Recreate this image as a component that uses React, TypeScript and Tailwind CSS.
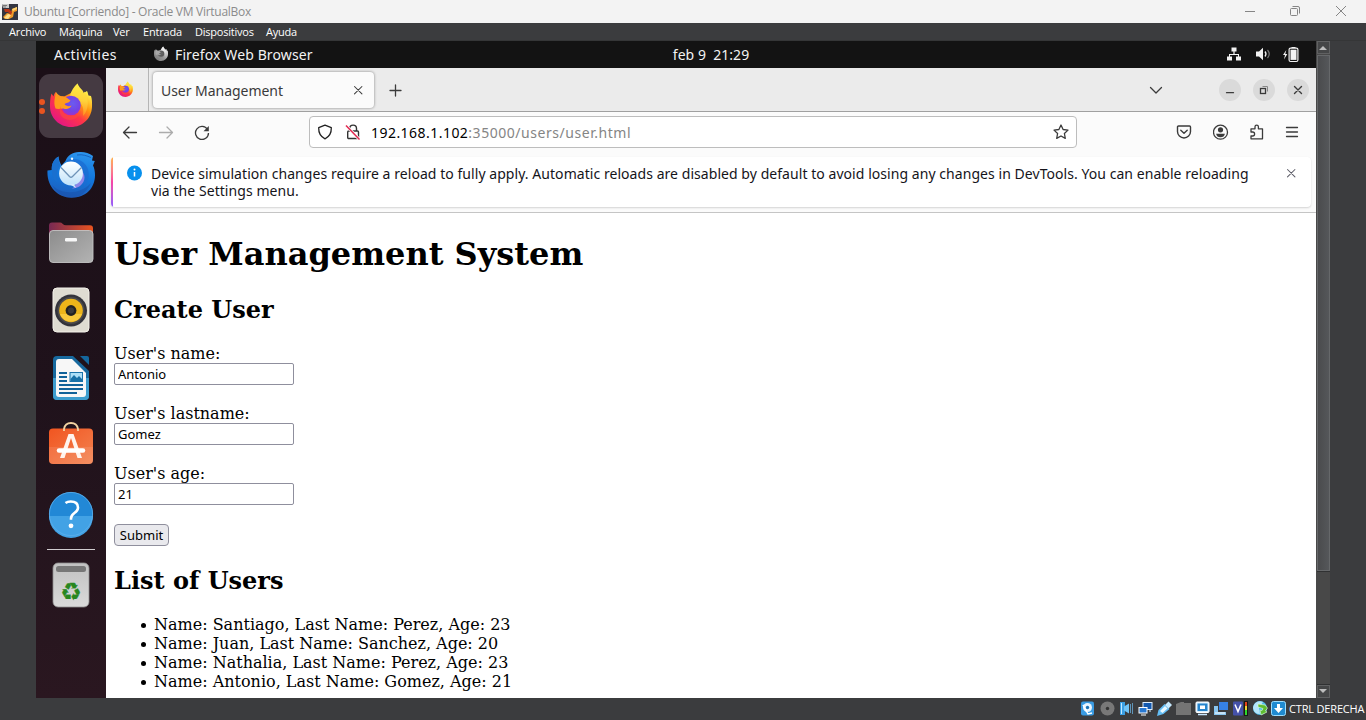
import React from "react";

const UI = "font-['Noto_Sans','Open_Sans',sans-serif]";

function FirefoxIcon({ className, gray = false }: { className: string; gray?: boolean }) {
  const id = gray ? "fg" : "fc";
  return (
    <svg viewBox="0 0 48 48" className={className}>
      <defs>
        <linearGradient id={id + "a"} x1="0.85" y1="0.1" x2="0.2" y2="0.95">
          <stop offset="0.05" stopColor={gray ? "#e4e4e4" : "#fff44f"} />
          <stop offset="0.35" stopColor={gray ? "#bfbfbf" : "#ff980e"} />
          <stop offset="0.6" stopColor={gray ? "#9a9a9a" : "#ff3647"} />
          <stop offset="1" stopColor={gray ? "#7d7d7d" : "#e31587"} />
        </linearGradient>
        <radialGradient id={id + "b"} cx="0.6" cy="0.4" r="0.65">
          <stop offset="0" stopColor={gray ? "#666" : "#6a5cf0"} />
          <stop offset="0.6" stopColor={gray ? "#5a5a5a" : "#7542e5"} />
          <stop offset="1" stopColor={gray ? "#777" : "#a82fc4"} />
        </radialGradient>
        <linearGradient id={id + "c"} x1="0.5" y1="0" x2="0.4" y2="1">
          <stop offset="0" stopColor={gray ? "#fff" : "#ffee45"} />
          <stop offset="0.5" stopColor={gray ? "#ddd" : "#ffd23a"} />
          <stop offset="1" stopColor={gray ? "#aaa" : "#ff8a1e"} />
        </linearGradient>
      </defs>
      <path d="M9 10c-.2 2 .3 3.700 1.300 5.200C13 14 15 14 17 14.500L30 8c-1-2-.5-5 .5-6.500 1 3 3.500 5 5 7 .6 1 1 1.700 1.300 2.500L40 9c1 2 1 3 1.500 4.500l2.500.500C45 17 45.200 20 45 25c-.5 11.500-9.500 20-21 20S3 36 3 24.500c0-4 0-8 1.500-13l2 3C7 12.500 7.500 11 9 10Z" fill={`url(#${id}a)`} />
      <path d="M23 14c1-5 4-9.500 7.500-12.500.3 4.500 4 7 5.500 11 .8-1 1-1.500 1-3C42 14 42.500 28 36 34c1-7 0-11-4-14-3-2-6-3-9-6Z" fill={`url(#${id}c)`} />
      <circle cx="24" cy="23.500" r="9.800" fill={`url(#${id}b)`} />
      <path d="M9 10c1.500 2.500 4 4.500 7.500 4.500 3 0 4.500 2.500 7 4-1.500 2.500-4.500 2.300-6 3.600 1.500 2.500 5 2.500 7 1.400-1 3-5 4.500-8 3-3 0-5 1-8 0C6 20 8.500 14 9 10Z" fill={gray ? "#a8a8a8" : "#ff9b1c"} />
      <path d="M13.500 24c.2 6 5 9.500 10.500 9.500 4.500 0 8-2 10-5-1 6-5.500 9.500-11 9.500-6.500 0-12.500-5-9.500-14Z" fill={gray ? "#8b8b8b" : "#ff4f35"} opacity="0.5" />
    </svg>
  );
}

function ThunderbirdIcon() {
  return (
    <svg viewBox="0 0 48 48" className="size-12">
      <defs>
        <linearGradient id="tb" x1="0.6" y1="0" x2="0.4" y2="1">
          <stop offset="0" stopColor="#2b93ec" />
          <stop offset="0.5" stopColor="#1277dc" />
          <stop offset="1" stopColor="#1f5dbb" />
        </linearGradient>
        <linearGradient id="tw" x1="0" y1="0" x2="0" y2="1">
          <stop offset="0" stopColor="#fff" />
          <stop offset="1" stopColor="#bfe2fb" />
        </linearGradient>
      </defs>
      <path d="M11.500 6.500C6.500 9.500 4.500 14 4.800 20L.5 20.500C-.5 36 10 47.700 24.500 47.700S48 38 48 25c0-3.500-.6-7-2-9.500l1.800-4.500-2.800-.5 1-4.500c-4-3.500-9-4.300-14-4-6.500.3-11.500 3.500-13.500 9l-4 4.500c-1.500-3-2.500-5-3-9Z" fill="url(#tb)" />
      <path d="M11.500 6.500C6.500 9.500 4.500 14 4.800 20c0 5 1.200 9 5.200 12-1-7 0-12 3.500-16.500-1.500-3-2-5-2-9Z" fill="#1a70cf" />
      <path d="M18.500 11c6-3 13-2.500 18 1.500 7 6 7 17 0 25 1.500-8 0-16-6-21-4-3-8-4-12-5.500Z" fill="#1b6dd2" opacity="0.8" />
      <path d="M33 19c6 5 6 12 0 17-2 1.500-5 2.500-8 2.500 2-1 3-2 3.500-4 4-4 5-9 4.500-15.500Z" fill="#8f86e9" />
      <circle cx="24" cy="23.500" r="11.900" fill="url(#tw)" />
      <path d="M23 34.500l6 3.500-2-4Z" fill="#d5ebfc" />
      <path d="M14 17.500l8.500 9c1 1 2 1 3 0l9-9" fill="none" stroke="#6d93b8" strokeWidth="1.300" />
      <circle cx="25" cy="8.700" r="1.200" fill="#eaf6ff" />
      <path d="M30 5c6-1 10 1 14 2.500" fill="none" stroke="#1663bd" strokeWidth="1" />
      <path d="M5 35c8 9 27 11 39-2-4 9-11 14.700-19.500 14.700S9 43 5 35Z" fill="#164aa3" opacity="0.4" />
    </svg>
  );
}

function FilesIcon() {
  return (
    <svg viewBox="0 0 48 48" className="size-12">
      <defs>
        <linearGradient id="fo" x1="0" y1="0" x2="1" y2="0">
          <stop offset="0" stopColor="#772953" />
          <stop offset="1" stopColor="#e95420" />
        </linearGradient>
        <linearGradient id="fb" x1="0" y1="0" x2="1" y2="1">
          <stop offset="0" stopColor="#8c8c8c" />
          <stop offset="1" stopColor="#b3b3b3" />
        </linearGradient>
      </defs>
      <path d="M2 20V7.500q0-3 3-3h8q1.500 0 2.500 1.200Q17 7.300 19 7.300h24q3 0 3 3v10Z" fill="url(#fo)" />
      <rect x="2.500" y="12.500" width="43.500" height="32" rx="3.500" fill="url(#fb)" stroke="#c4c4c4" strokeWidth="0.900" />
      <rect x="18" y="20" width="12" height="3.500" rx="1.200" fill="#f7f7f7" />
    </svg>
  );
}

function RhythmboxIcon() {
  return (
    <svg viewBox="0 0 48 48" className="size-12">
      <rect x="6" y="2" width="36" height="44" rx="4" fill="#dfdcd2" stroke="#f4f2ea" />
      <circle cx="24" cy="24.500" r="16" fill="#34343c" />
      <circle cx="24" cy="24.500" r="13.500" fill="#4c4b4c" />
      <circle cx="24" cy="24.500" r="11.800" fill="#edb51a" />
      <path d="M13 28a11.800 11.800 0 0 0 22 0Z" fill="#f9c93b" />
      <circle cx="24" cy="24.500" r="5.400" fill="#222" />
      <circle cx="24" cy="24.500" r="3" fill="#3b3b3d" />
    </svg>
  );
}

function WriterIcon() {
  return (
    <svg viewBox="0 0 48 48" className="size-12">
      <path d="M10 2h16l16 15v25q0 4-4 4H10q-4 0-4-4V6q0-4 4-4Z" fill="#17699e" />
      <path d="M6 24h36v18q0 4-4 4H10q-4 0-4-4Z" fill="#3d9dce" />
      <path d="M33 2h7q2 0 2 2v7Z" fill="#14679d" />
      <path d="M12 5h13l14 14v21q0 3-3 3H12q-3 0-3-3V8q0-3 3-3Z" fill="#f7f7f7" />
      <path d="M12 19h8M12 23h8M12 27h8M12 31h24M12 35h24M12 39h18" stroke="#116299" strokeWidth="1.900" />
      <rect x="23" y="18.500" width="12.500" height="9" fill="#acdff7" stroke="#1972a9" />
      <path d="M23.500 27v-2l3.500-4 3 3 2-2 3 3v2Z" fill="#1770a6" />
    </svg>
  );
}

function SoftwareIcon() {
  return (
    <svg viewBox="0 0 48 48" className="size-12">
      <defs>
        <linearGradient id="sw" x1="0" y1="0" x2="1" y2="1">
          <stop offset="0" stopColor="#f15520" />
          <stop offset="1" stopColor="#f38250" />
        </linearGradient>
      </defs>
      <rect x="2" y="6.500" width="44" height="35.500" rx="4" fill="url(#sw)" />
      <path d="M2 25h44v13q0 4-4 4H6q-4 0-4-4Z" fill="#fff" opacity="0.1" />
      <path d="M17 9V7q1-6 7-6t7 6v2" fill="none" stroke="#f2d3a2" strokeWidth="1.800" />
      <path d="M21.500 12h5L35 36h-4.500L24 16l-6.500 20H13Z" fill="#fff3ed" />
      <path d="M12 28.500h24" stroke="#fff" strokeWidth="4.500" strokeLinecap="round" />
    </svg>
  );
}

function HelpIcon() {
  return (
    <svg viewBox="0 0 48 48" className="size-12">
      <circle cx="24" cy="24" r="22" fill="#2288d6" />
      <path d="M2 26a22 22 0 0 0 44 0Z" fill="#42a2e5" />
      <circle cx="24" cy="24" r="21.600" fill="none" stroke="#5db0ec" strokeWidth="0.800" />
      <path d="M18.500 13q2-1.500 5.200-1.500 7.300 0 7.300 6 0 3-3.600 5.500-3.400 2.500-3.400 5.500v1.300" fill="none" stroke="#fff" strokeWidth="2.600" />
      <circle cx="24" cy="35.800" r="2.400" fill="#fff" />
    </svg>
  );
}

function TrashIcon() {
  return (
    <svg viewBox="0 0 48 48" className="size-12">
      <defs>
        <linearGradient id="tr" x1="0" y1="0" x2="0" y2="1">
          <stop offset="0" stopColor="#c1c1c1" />
          <stop offset="1" stopColor="#dadada" />
        </linearGradient>
      </defs>
      <rect x="6" y="2" width="36" height="44" rx="5" fill="url(#tr)" stroke="#8f8f8f" strokeWidth="0.800" />
      <rect x="9" y="5" width="30" height="6" rx="2.500" fill="#777" />
      <text x="24" y="38.500" textAnchor="middle" className="font-['DejaVu_Sans',sans-serif] text-[24px]" fill="#27871f" stroke="#27871f" strokeWidth="0.300">♻</text>
    </svg>
  );
}

function Stroke({ className, d, color = "#3b3b3b", w = 1.3 }: { className: string; d: string; color?: string; w?: number }) {
  return (
    <svg viewBox="0 0 16 16" className={className} fill="none" stroke={color} strokeWidth={w} strokeLinecap="round" strokeLinejoin="round">
      <path d={d} />
    </svg>
  );
}

function TitleBar() {
  return (
    <div className="flex h-[23px] items-center bg-[#f3f3f3] pl-0.5">
      <svg viewBox="0 0 16 16" className="size-4">
        <rect width="16" height="16" fill="#343541" />
        <path d="M1 13l4-4 4 1 1-5 5-2v4l-3 1-1 5-4 2H3Z" fill="#f19a28" />
        <path d="M2 14l4-4 3 1-3 4Z" fill="#ffdf8c" />
        <path d="M10 5l5-2v2l-4 2Z" fill="#ffd575" />
        <path d="M2 5h5l3 3-1 3-3-3H3Z" fill="#ba3619" />
        <path d="M0 0h7v4H1Z" fill="#c9c9c9" />
        <path d="M1 1.500h4M1 3h3" stroke="#555" strokeWidth=".7" />
      </svg>
      <span className="ml-[6px] font-['Open_Sans',sans-serif] text-[12px] leading-4 tracking-[-0.27px] whitespace-nowrap text-[#8b8b8b]">Ubuntu [Corriendo] - Oracle VM VirtualBox</span>
      <div className="ml-auto flex items-center gap-[29px] pr-[17px] text-[#858585]">
        <svg viewBox="0 0 16 16" className="size-4" fill="none" stroke="#858585"><path d="M2 7.500h10" /></svg>
        <svg viewBox="0 0 16 16" className="size-4" fill="none" stroke="#858585"><rect x="2.500" y="4.500" width="7" height="7" rx="1" /><path d="M4.500 2.500H10q1.500 0 1.500 1.500v5.500" /></svg>
        <svg viewBox="0 0 16 16" className="size-4" fill="none" stroke="#858585"><path d="M3 2l10 10M13 2l-10 10" /></svg>
      </div>
    </div>
  );
}

function MenuBar() {
  return (
    <div className="flex h-[18px] items-center border-b border-[#353637] bg-[#3b3c3e] pl-[9px] font-['Open_Sans',sans-serif] text-[11px] leading-[17px] text-white">
      <span className="w-[50px] tracking-[-0.15px]">Archivo</span>
      <span className="w-[54px] tracking-[-0.25px]">Máquina</span>
      <span className="w-[30px] tracking-[-0.2px]">Ver</span>
      <span className="w-[52px] tracking-[-0.2px]">Entrada</span>
      <span className="w-[71px] tracking-[-0.23px]">Dispositivos</span>
      <span className="tracking-[-0.25px]">Ayuda</span>
    </div>
  );
}

function GnomeBar() {
  return (
    <div className={`${UI} grid h-[27px] grid-cols-[1fr_auto_1fr] items-center bg-[#131313] text-[14px] text-[#f2f2f2]`}>
      <div className="flex items-center pl-[18px]">
        <span className="w-[99px] tracking-[0.46px]">Activities</span>
        <FirefoxIcon gray className="size-[16px] -translate-y-px" />
        <span className="ml-[6px] tracking-[0.12px]">Firefox Web Browser</span>
      </div>
      <span className="translate-x-[35px] whitespace-pre tracking-[0.03px]">feb 9  21:29</span>
      <div className="flex items-center justify-end gap-[12px] pr-[16px]">
        <svg viewBox="0 0 16 16" className="size-4" fill="#f2f2f2"><path d="M5.500 0.500h5v4H8.600v2.500H13V9.500h2v4h-5v-4h2V8H4v1.500h2v4H1v-4h2V7h4.400V4.500H5.500Z" /></svg>
        <svg viewBox="0 0 16 16" className="size-4 translate-x-px"><path d="M1 4.500h3L8 .8v12.400L4 9.500H1Z" fill="#f2f2f2" /><path d="M10 4.500q2 2.500 0 5" fill="none" stroke="#f2f2f2" strokeWidth="1.300" /><path d="M12.500 3q3.500 4 0 8" fill="none" stroke="#777" strokeWidth="1.200" /></svg>
        <svg viewBox="0 0 18 16" className="h-4 w-[18px]"><path d="M4.300 3L1 8h2l-1 4.500L5.300 7h-2Z" fill="#f2f2f2" /><rect x="7.100" y="1.100" width="8.800" height="13.400" rx="1.500" fill="none" stroke="#f2f2f2" strokeWidth="1.200" /><rect x="8.500" y="2.700" width="6" height="10.200" fill="#f2f2f2" /><path d="M9.500 0h4v1h-4Z" fill="#f2f2f2" /></svg>
      </div>
    </div>
  );
}

function Dock() {
  const slot = "flex h-[68px] shrink-0 items-center justify-center";
  return (
    <div className="flex w-[70px] flex-col bg-linear-to-b from-[#1b0f17] via-[#1f121b] to-[#2a1720] pt-1">
      <div className={slot}>
        <div className="relative flex size-16 items-center justify-center rounded-[11px] bg-[#453a42]">
          <FirefoxIcon className="size-12" />
          <div className="absolute top-[25px] left-0 flex flex-col gap-[3px]">
            <i className="size-[6px] rounded-full bg-[#e95420]" />
            <i className="size-[6px] rounded-full bg-[#e95420]" />
          </div>
        </div>
      </div>
      <div className={slot}><ThunderbirdIcon /></div>
      <div className={slot}><FilesIcon /></div>
      <div className={slot}><RhythmboxIcon /></div>
      <div className={slot}><WriterIcon /></div>
      <div className={slot}><SoftwareIcon /></div>
      <div className={slot}><HelpIcon /></div>
      <div className="mx-[11px] mt-px mb-px h-px bg-[#d0cdcf]" />
      <div className={slot}><TrashIcon /></div>
    </div>
  );
}

function TabStrip() {
  const round = "flex size-[22px] items-center justify-center rounded-full bg-[#dadada]";
  return (
    <div className="flex h-[44px] items-center border-b border-[#a0a0a0] bg-[#ebebeb]">
      <div className="flex h-full w-[43px] items-center border-r border-[#b5b5b5] pl-[11px]"><FirefoxIcon className="size-[17px]" /></div>
      <div className="ml-[4px] flex h-[36px] w-[221px] items-center rounded-[4px] bg-[#fbfbfb] pr-[9px] pl-2 shadow-[0_0_3px_rgba(0,0,0,0.45)]">
        <span className="translate-y-px text-[14px] tracking-[-0.04px] text-[#3a3a3a]">User Management</span>
        <Stroke className="ml-auto size-[14px]" d="M4 4l8.500 8.500M12.500 4L4 12.500" w={1.2} />
      </div>
      <Stroke className="ml-[13px] size-4" d="M8.500 3v11M3 8.500h11" />
      <Stroke className="ml-auto size-4" d="M2.500 5.500L8 11l5.500-5.500" />
      <div className="ml-[55px] flex gap-3 pr-[7px]">
        <div className={round}><Stroke className="size-[14px]" d="M4 11h8" w={1.400} /></div>
        <div className={round}><svg viewBox="0 0 14 14" className="size-[14px]" fill="none" stroke="#3a3a3a"><rect x="3.500" y="5.500" width="5" height="5" strokeWidth="1.300" /><path d="M5.500 3.500h5v5" stroke="#888" /></svg></div>
        <div className={round}><Stroke className="size-[14px]" d="M4 4l8 8M12 4l-8 8" w={1.600} /></div>
      </div>
    </div>
  );
}

function NavBar() {
  return (
    <div className="flex h-[40px] items-center pl-4">
      <Stroke className="size-4" d="M14.500 8.500H1.500M7 3L1.500 8.500 7 14" />
      <Stroke className="ml-5 size-4" d="M1.500 8.500h13M9 3L14.500 8.500 9 14" color="#acacac" />
      <svg viewBox="0 0 16 16" className="ml-5 size-4" fill="none" stroke="#3b3b3b" strokeWidth="1.300"><path d="M13.500 5.500A6.500 6.500 0 1 0 14.500 9" /><path d="M14.800 2v5.300H9.500Z" fill="#3b3b3b" stroke="none" /></svg>
      <div className="ml-[99px] flex h-8 w-[768px] items-center rounded-[4px] border border-[#bdbdbd] bg-white px-[7px]">
        <Stroke className="size-4" d="M8 1.200L14.300 3.700C14.500 9 12.500 12.500 8 14.800 3.500 12.500 1.500 9 1.700 3.700Z" color="#222" />
        <svg viewBox="0 0 16 16" className="ml-3 size-4" fill="none" stroke="#333" strokeWidth="1.400"><path d="M4.700 7V4.500a3.400 3.400 0 0 1 6.800 0V7" /><rect x="2.700" y="7" width="10.800" height="7.500" rx="1" /><path d="M1 1.500l13.500 14" stroke="#fff" strokeWidth="3" /><path d="M1 1.500l13.500 14" stroke="#e22850" strokeWidth="1.500" /></svg>
        <span className="ml-[10px] text-[14px] text-[#858585]"><span className="tracking-[0.46px] text-black">192.168.1.102</span><span className="tracking-[0.54px]">:35000/users/user.html</span></span>
        <Stroke className="ml-auto size-4" d="M8 1l2.100 4.500 4.900.6-3.600 3.400.9 4.900L8 12l-4.300 2.400.9-4.900L1 6.100l4.900-.6Z" />
      </div>
      <Stroke className="ml-[99px] size-4" d="M2.500 2h11q1 0 1 1v4.500a6.500 6.500 0 0 1-13 0V3q0-1 1-1ZM4.800 6.200L8 9.200l3.200-3" w={1.400} />
      <svg viewBox="0 0 16 16" className="ml-[21px] size-4"><circle cx="7.500" cy="8.200" r="7" fill="none" stroke="#3b3b3b" strokeWidth="1.300" /><circle cx="7.500" cy="5.800" r="2.600" fill="#3b3b3b" /><path d="M3.100 9.700h8.800q-.7 3.500-4.400 3.500T3.100 9.700Z" fill="#3b3b3b" /></svg>
      <Stroke className="ml-5 size-4" d="M2 4.800h4V2.800a1.700 1.700 0 0 1 3.400 0v2H13.500v10H2V12h1.600a1.700 1.700 0 0 0 0-4H2Z" />
      <Stroke className="ml-[19px] size-4" d="M2.500 3.500h11M2.500 8h11M2.500 12.500h11" />
    </div>
  );
}

function Notice() {
  return (
    <div className="mx-[5px] mt-[5px] flex h-[50px] overflow-hidden rounded-[4px] bg-white shadow-[0_1px_2px_rgba(0,0,0,0.16)]">
      <div className="w-[2px] bg-linear-to-b from-[#ffb347] via-[#f743a5] to-[#9059ff]" />
      <svg viewBox="0 0 16 16" className="mt-2 ml-[14px] size-4 shrink-0"><circle cx="7.500" cy="8" r="7.500" fill="#0790ed" /><path d="M7.500 7v4.500" stroke="#fff" strokeWidth="1.500" /><circle cx="7.500" cy="4.500" r="1" fill="#fff" /></svg>
      <p className="mt-2 ml-2 text-[14px] leading-[17px] whitespace-nowrap text-[#15141a]">
        <span className="tracking-[0.053px]">Device simulation changes require a reload to fully apply. Automatic reloads are disabled by default to avoid losing any changes in DevTools. You can enable reloading</span><br />
        <span className="tracking-[0.06px]">via the Settings menu.</span>
      </p>
      <Stroke className="mt-[9px] mr-[13px] ml-auto size-[14px] shrink-0" d="M4 4l8.500 8.500M12.500 4L4 12.500" color="#5b5b66" w={1.2} />
    </div>
  );
}

function Field({ label, value }: { label: string; value: string }) {
  return (
    <label className="mb-[18px] block h-[42px] text-[16px] leading-[19px]">
      <span className="block">{label}</span>
      <input defaultValue={value} className={`${UI} block h-[22px] w-[180px] rounded-[2px] border border-[#8f8f9d] bg-white px-[3px] text-[13px]`} />
    </label>
  );
}

const users = [
  ["Santiago", "Perez", 23],
  ["Juan", "Sanchez", 20],
  ["Nathalia", "Perez", 23],
  ["Antonio", "Gomez", 21],
];

function Page() {
  return (
    <main className="min-h-0 flex-1 overflow-hidden bg-white px-2 font-['DejaVu_Serif',serif] text-black">
      <h1 className="mt-[22px] text-[32px] leading-[38px] font-bold">User Management System</h1>
      <h2 className="mt-[23px] text-[24px] leading-[28px] font-bold">Create User</h2>
      <form className="mt-5">
        <Field label="User's name:" value="Antonio" />
        <Field label="User's lastname:" value="Gomez" />
        <Field label="User's age:" value="21" />
        <button type="button" className={`${UI} block h-[22px] w-[55px] rounded-[4px] border border-[#8f8f9d] bg-[#e9e9ed] text-[13px] leading-[18px]`}>Submit</button>
      </form>
      <h2 className="mt-[21px] text-[24px] leading-[28px] font-bold">List of Users</h2>
      <ul className="mt-5 pl-10 text-[16px] leading-[19px]">
        {users.map(([name, last, age]) => (
          <li key={name} className="relative before:absolute before:top-[7.500px] before:-left-[13.500px] before:size-[5.500px] before:rounded-full before:bg-black">Name: {name}, Last Name: {last}, Age: {age}</li>
        ))}
      </ul>
    </main>
  );
}

function ScrollRail() {
  const btn = "flex h-[13px] w-[13px] shrink-0 items-center justify-center border border-[#606162] bg-[#454647]";
  return (
    <div className="flex w-[14px] flex-col bg-[#484848] pl-px">
      <div className={btn}><svg viewBox="0 0 8 4" className="h-1 w-2 -translate-x-px"><path d="M0 4l4-4 4 4Z" fill="#bdbdbd" /></svg></div>
      <div className="mt-px h-[516px] border border-[#66686a] bg-linear-to-r from-[#4a4b4d] to-[#55575a]" />
      <div className="flex-1 border-y border-[#303132]" />
      <div className={btn}><svg viewBox="0 0 8 4" className="h-1 w-2 -translate-x-px -translate-y-px"><path d="M0 0l4 4 4-4Z" fill="#bdbdbd" /></svg></div>
    </div>
  );
}

function StatusBar() {
  const s = "size-[15px] shrink-0";
  return (
    <div className="flex h-[22px] items-center gap-[4px] bg-[#3b3c3e] pb-px pl-[1080px]">
      <svg viewBox="0 0 15 15" className={s}><rect x="1" y="0.500" width="13" height="14" rx="2" fill="#3a9be2" /><circle cx="7.500" cy="6.500" r="4.500" fill="#e8f5ff" /><circle cx="7.500" cy="6.500" r="1.700" fill="#1b71b4" /><path d="M3 4l5 9 4-1" stroke="#fff" strokeWidth="1.500" fill="none" /></svg>
      <svg viewBox="0 0 15 15" className="ml-px size-[15px] shrink-0"><circle cx="7.500" cy="7.500" r="7" fill="#787878" /><circle cx="7.500" cy="7.500" r="1.700" fill="#333" /></svg>
      <svg viewBox="0 0 15 15" className={s}><path d="M1 1h5v13H1Z" fill="#3b9fe4" /><path d="M2.500 2v11" stroke="#c3e8ff" /><path d="M5 5.500l5-3v10l-5-3Z" fill="#70c4f8" /><path d="M11 3h1v9h-1ZM13 2h1v11h-1Z" fill="#6094b7" /></svg>
      <svg viewBox="0 0 15 15" className={s}><rect x="5" y="1.500" width="9" height="7" fill="#1359b0" stroke="#dceeff" /><path d="M11 10h2" stroke="#dceeff" /><rect x="1" y="6.500" width="8" height="5.500" fill="#2979d2" stroke="#fff" /><path d="M3 14h5" stroke="#fff" /></svg>
      <svg viewBox="0 0 15 15" className={s}><path d="M0 15l1.500-6 6-6 5 5-6 5Z" fill="#63bdf4" /><path d="M8 4l3.500-3.500 3.500 3.500-3.500 3.500Z" fill="#c7eaff" /><path d="M3 10l5-5 2.500 2.500-5 4.500Z" fill="#e8f8ff" /></svg>
      <svg viewBox="0 0 15 15" className={s}><path d="M0 3l5-2h3v1h7v12H0Z" fill="#747474" /></svg>
      <svg viewBox="0 0 15 15" className={s}><rect x="1" y="1" width="13" height="10.500" rx="1" fill="#d9efff" stroke="#fff" /><rect x="2.500" y="2.500" width="10" height="7.500" fill="#2584cd" /><rect x="5" y="4.500" width="5" height="3.500" fill="#fff" /><path d="M3 13.500h9" stroke="#c8e7ff" strokeWidth="1.500" /></svg>
      <svg viewBox="0 0 15 15" className={s}><path d="M0 5h4v6h8v3H0Z" fill="#8ac6f0" /><rect x="5" y="1" width="9" height="8" fill="#3681e4" /><path d="M1 12h10" stroke="#fff" /></svg>
      <svg viewBox="0 0 15 15" className={s}><rect x="0" y="0.500" width="10" height="14" rx="1" fill="#4451a9" /><path d="M2 3.500l3 7 3-7" fill="none" stroke="#fff" strokeWidth="1.500" /><path d="M11 0h4v15h-4Z" fill="#181818" /><path d="M12 1h2v5h-2Z" fill="#e64219" /><path d="M12 5h2v5h-2Z" fill="#f0d735" /><path d="M12 9h2v5h-2Z" fill="#2ed82b" /></svg>
      <svg viewBox="0 0 15 15" className="ml-px size-[15px] shrink-0"><circle cx="7" cy="7" r="7" fill="#4dbbe8" /><path d="M0 7a7 7 0 0 1 10-6L6 7l1 6Q1 13 0 7Z" fill="#b4e5fb" /><path d="M5 3l7 1 2.500 3-2 3 1.500 1-6 3-1-5 2 .5 1-2-5-1.500Z" fill="#5fbd31" stroke="#eaffdc" strokeWidth=".6" /></svg>
      <svg viewBox="0 0 15 15" className="-ml-px size-[15px] shrink-0"><rect x="0.500" y="0.500" width="14" height="14" rx="2" fill="#208bd1" stroke="#9bddff" /><path d="M6 3h3v4h3l-4.500 5L3 7h3Z" fill="#fff" /></svg>
      <span className="-ml-px translate-y-px font-['Open_Sans',sans-serif] text-[11px] tracking-[-0.17px] whitespace-nowrap text-white">CTRL DERECHA</span>
    </div>
  );
}

export default function App() {
  return (
    <div className="flex h-[720px] w-[1366px] flex-col overflow-hidden bg-[#3b3c3e]">
      <TitleBar />
      <MenuBar />
      <div className="flex h-[657px] pl-9">
        <div className="flex w-[1280px] flex-col">
          <GnomeBar />
          <div className="flex min-h-0 flex-1">
            <Dock />
            <div className="flex min-w-0 flex-1 flex-col bg-[#fbfbfb]">
              <div className={`${UI} flex h-[145px] shrink-0 flex-col border-b border-[#c5c5c5]`}>
                <TabStrip />
                <NavBar />
                <Notice />
              </div>
              <Page />
            </div>
          </div>
        </div>
        <ScrollRail />
      </div>
      <StatusBar />
    </div>
  );
}
